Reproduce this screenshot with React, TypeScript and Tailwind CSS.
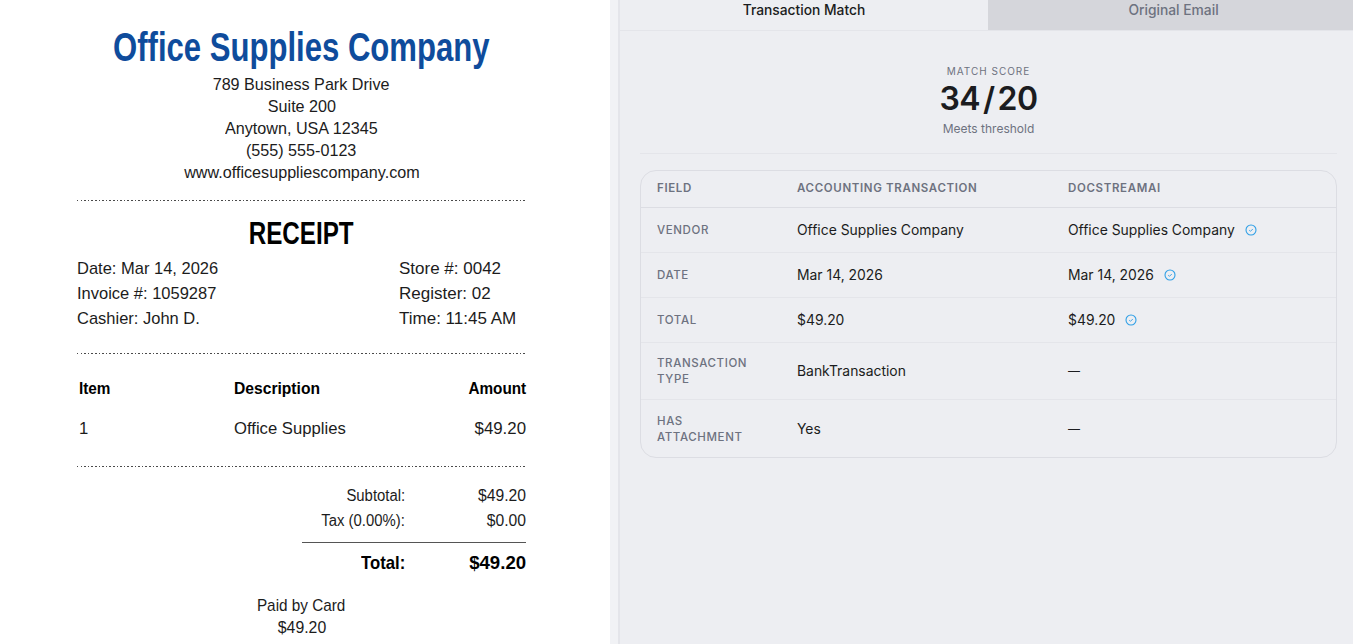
const receiptFont = "[font-family:'Liberation_Sans',Arial,sans-serif]";

function Squeezed({ children, className = "scale-x-[0.95]" }: { children: React.ReactNode; className?: string }) {
  return <span className={`inline-block whitespace-nowrap ${className}`}>{children}</span>;
}

function CheckBadge() {
  return (
    <svg viewBox="0 0 12 12" className="h-3 w-3 shrink-0" fill="none" stroke="#2f9fe6">
      <circle cx="6" cy="6" r="5" strokeWidth="1.1" />
      <path d="M4.2 6.2 5.5 7.3 7.8 5" strokeWidth="0.9" />
    </svg>
  );
}

function Dotted() {
  return <div className="h-px bg-[repeating-linear-gradient(90deg,#4a4a4a_0,#4a4a4a_1.5px,transparent_1.5px,transparent_3.6px)]" />;
}

function Receipt() {
  const lines = ["789 Business Park Drive", "Suite 200", "Anytown, USA 12345", "(555) 555-0123", "www.officesuppliescompany.com"];
  const metaLeft = ["Date: Mar 14, 2026", "Invoice #: 1059287", "Cashier: John D."];
  const metaRight = ["Store #: 0042", "Register: 02", "Time: 11:45 AM"];
  return (
    <div className={`w-[610px] shrink-0 bg-white pl-[77px] pr-[84px] pt-[25px] text-[#1c1c1c] ${receiptFont}`}>
      <div className="flex h-[44px] items-center justify-center text-[40px] font-bold text-[#0f4c9c]">
        <span className="inline-block scale-x-[0.777] whitespace-nowrap">Office Supplies Company</span>
      </div>
      <div className="mt-[5px] text-center text-[17px] leading-[22px]">
        {lines.map((l) => (
          <div key={l}><Squeezed>{l}</Squeezed></div>
        ))}
      </div>
      <div className="mt-[16px]"><Dotted /></div>
      <div className="mt-[18px] flex h-[30px] items-center justify-center text-[31px] font-bold text-black">
        <Squeezed className="scale-x-[0.78]">RECEIPT</Squeezed>
      </div>
      <div className="mt-[7px] flex justify-between text-[17px] leading-[25px]">
        <div>
          {metaLeft.map((l) => (
            <div key={l}><Squeezed className="origin-left scale-x-[0.97]">{l}</Squeezed></div>
          ))}
        </div>
        <div className="w-[127px]">
          {metaRight.map((l) => (
            <div key={l}><Squeezed className="origin-left">{l}</Squeezed></div>
          ))}
        </div>
      </div>
      <div className="mt-[22px]"><Dotted /></div>
      <div className="mt-[24px] grid grid-cols-[155px_1fr_auto] pl-[2px] text-[17px] font-bold leading-[22px] text-black">
        <Squeezed className="origin-left scale-x-[0.9]">Item</Squeezed>
        <Squeezed className="origin-left scale-x-[0.92]">Description</Squeezed>
        <Squeezed className="origin-right scale-x-[0.9]">Amount</Squeezed>
      </div>
      <div className="mt-[18px] grid grid-cols-[155px_1fr_auto] pl-[2px] text-[17px] leading-[22px]">
        <Squeezed className="origin-left scale-x-[0.98]">1</Squeezed>
        <Squeezed className="origin-left scale-x-[0.98]">Office Supplies</Squeezed>
        <Squeezed className="origin-right scale-x-[0.99]">$49.20</Squeezed>
      </div>
      <div className="mt-[26px]"><Dotted /></div>
      <div className="ml-auto mt-[16px] w-[224px] text-[16px] leading-[25px]">
        <div className="flex justify-between">
          <span className="w-[103px] text-right"><Squeezed className="origin-right scale-x-[0.93]">Subtotal:</Squeezed></span>
          <Squeezed className="origin-right scale-x-[0.98]">$49.20</Squeezed>
        </div>
        <div className="flex justify-between">
          <span className="w-[103px] text-right"><Squeezed className="origin-right scale-x-[0.93]">Tax (0.00%):</Squeezed></span>
          <Squeezed className="origin-right scale-x-[0.98]">$0.00</Squeezed>
        </div>
        <div className="mt-[9px] border-t border-[#555]" />
        <div className="mt-[8px] flex justify-between text-[19px] font-bold leading-[24px] text-black">
          <span className="w-[103px] text-right"><Squeezed className="origin-right scale-x-[0.88]">Total:</Squeezed></span>
          <Squeezed className="origin-right scale-x-[0.98]">$49.20</Squeezed>
        </div>
      </div>
      <div className="mt-[20px] text-center text-[17px] leading-[22px]">
        <div><Squeezed className="scale-x-[0.9]">Paid by Card</Squeezed></div>
        <div><Squeezed className="scale-x-[0.93]">$49.20</Squeezed></div>
      </div>
    </div>
  );
}

const rows = [
  { field: ["VENDOR"], left: "Office Supplies Company", right: "Office Supplies Company", ok: true },
  { field: ["DATE"], left: "Mar 14, 2026", right: "Mar 14, 2026", ok: true },
  { field: ["TOTAL"], left: "$49.20", right: "$49.20", ok: true },
  { field: ["TRANSACTION", "TYPE"], left: "BankTransaction", right: "—", ok: false },
  { field: ["HAS", "ATTACHMENT"], left: "Yes", right: "—", ok: false },
];

function MatchPanel() {
  return (
    <div className="flex-1 border-l-2 border-[#e4e5ea] bg-[#edeef2] [font-family:Inter,sans-serif]">
      <div className="flex h-[31px] border-b border-[#e4e5ea]">
        <div className="flex h-[30px] w-[368px] justify-center pt-[1px] text-[13.8px] font-medium leading-[18px] text-[#1b1c20]">Transaction Match</div>
        <div className="flex h-[30px] flex-1 justify-center bg-[#d5d6db] pl-[6px] pt-[1px] text-[13.8px] font-medium leading-[18px] text-[#6d7280]">Original Email</div>
      </div>
      <div className="pl-[20px] pr-[16px]">
        <div className="flex h-[123px] flex-col items-center border-b border-[#e4e5ea] pt-[34px]">
          <div className="text-[10px] leading-[13px] tracking-[1px] text-[#6d7280]">MATCH SCORE</div>
          <div className="mt-[3px] text-[32px] font-semibold leading-[36px] tracking-[-0.6px] text-[#1b1c20]">34<span className="mx-[3px]">/</span>20</div>
          <div className="mt-[4px] text-[12px] leading-[16px] text-[#6d7280]">Meets threshold</div>
        </div>
        <div className="mt-[16px] overflow-hidden rounded-2xl border border-[#dcdde3]">
          <div className="grid h-[37px] grid-cols-[140px_271px_1fr] items-center border-b border-[#dcdde3] px-4 text-[11.5px] font-semibold tracking-[0.65px] text-[#6d7280]">
            <div>FIELD</div>
            <div>ACCOUNTING TRANSACTION</div>
            <div>DOCSTREAMAI</div>
          </div>
          {rows.map((r, i) => (
            <div
              key={r.left}
              className={`grid grid-cols-[140px_271px_1fr] items-center px-4 text-[13.9px] text-[#1b1c20] ${r.field.length > 1 ? "h-[57px]" : "h-[45px]"} ${i < rows.length - 1 ? "border-b border-[#e4e5ea]" : ""}`}
            >
              <div className="text-[11.5px] font-medium leading-[16px] tracking-[0.6px] text-[#6d7280]">
                {r.field.map((f) => <div key={f}>{f}</div>)}
              </div>
              <div className="leading-[16px]">{r.left}</div>
              <div className="flex items-center gap-[10px] leading-[16px]">
                <span className={r.ok ? "" : "text-[12px] font-medium"}>{r.right}</span>
                {r.ok && <CheckBadge />}
              </div>
            </div>
          ))}
        </div>
      </div>
    </div>
  );
}

export default function App() {
  return (
    <div className="flex h-[644px] w-[1353px] overflow-hidden bg-[#f1f2f5]">
      <Receipt />
      <div className="w-2 shrink-0" />
      <MatchPanel />
    </div>
  );
}
